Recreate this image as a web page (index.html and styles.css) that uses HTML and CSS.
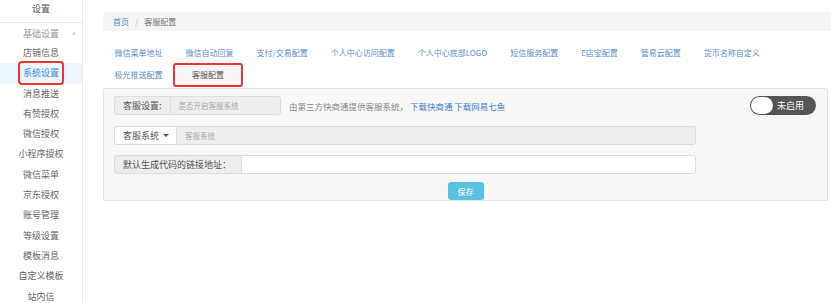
FILE: index.html
```html
<!DOCTYPE html>
<html lang="zh">
<head>
    <meta charset="UTF-8">
    <title>客服配置</title>
    <link rel="stylesheet" href="styles.css">
</head>
<body>
    <aside class="sidebar">
        <div class="side-title">设置</div>
        <div class="side-group">基础设置 <span class="chev">^</span></div>
        <div class="side-item">店铺信息</div>
        <div class="side-item active"><span class="mark">系统设置</span></div>
        <div class="side-item">消息推送</div>
        <div class="side-item">有赞授权</div>
        <div class="side-item">微信授权</div>
        <div class="side-item">小程序授权</div>
        <div class="side-item">微信菜单</div>
        <div class="side-item">京东授权</div>
        <div class="side-item">账号管理</div>
        <div class="side-item">等级设置</div>
        <div class="side-item">模板消息</div>
        <div class="side-item">自定义模板</div>
        <div class="side-item">站内信</div>
    </aside>
    <main class="content">
        <div class="crumb">
            <a href="#">首页</a><span class="sep">/</span><span class="here">客服配置</span>
        </div>
        <nav class="tabs">
            <a href="#">微信菜单地址</a>
            <a href="#">微信自动回复</a>
            <a href="#">支付/交易配置</a>
            <a href="#">个人中心访问配置</a>
            <a href="#">个人中心底部LOGO</a>
            <a href="#">短信服务配置</a>
            <a href="#">E店宝配置</a>
            <a href="#">管易云配置</a>
            <a href="#">货币名称自定义</a>
            <a href="#">极光推送配置</a>
            <a href="#" class="current">客服配置</a>
        </nav>
        <div class="panel">
            <div class="row first">
                <div class="group small">
                    <span class="addon">客服设置:</span>
                    <span class="field ro">是否开启客服系统</span>
                </div>
                <span class="desc">由第三方快商通提供客服系统， <a href="#">下载快商通</a> <a href="#">下载网易七鱼</a></span>
                <div class="toggle"><span class="knob"></span>未启用</div>
            </div>
            <div class="row">
                <div class="group">
                    <span class="addon btn">客服系统 <span class="caret"></span></span>
                    <span class="field ro">客服系统</span>
                </div>
            </div>
            <div class="row">
                <div class="group">
                    <span class="addon wide">默认生成代码的链接地址：</span>
                    <span class="field"></span>
                </div>
            </div>
            <div class="actions">
                <button class="save">保存</button>
            </div>
        </div>
    </main>
</body>
</html>
```

FILE: styles.css
```css
body {
    margin: 0;
    display: flex;
    font-family: "Noto Sans CJK SC", "Liberation Sans", sans-serif;
    color: #555;
    background: #fff;
    height: 303px;
    overflow: hidden;
}
a {
    color: #4f8fcc;
    text-decoration: none;
}
.sidebar {
    width: 82px;
    flex-shrink: 0;
    border-right: 1px solid #e8e8e8;
    font-size: 9px;
    text-align: center;
}
.side-title {
    height: 22px;
    line-height: 17px;
    border-bottom: 1px solid #e8e8e8;
    color: #555;
}
.side-group {
    height: 20px;
    line-height: 21px;
    color: #999;
    position: relative;
}
.chev {
    position: absolute;
    right: 6px;
    top: 1px;
    font-size: 7px;
    color: #aaa;
}
.side-item {
    height: 20.3px;
    line-height: 20.3px;
    color: #666;
}
.side-item.active {
    background: #edf5fe;
    color: #3b8de0;
}
.mark {
    display: inline-block;
    line-height: 20px;
    padding: 0 3px;
    outline: 2px solid #e33;
    border-radius: 2px;
}
.content {
    flex: 1;
    padding: 12px 0 0 20px;
}
.crumb {
    height: 19px;
    line-height: 19px;
    background: #f5f5f5;
    border-radius: 4px 0 0 4px;
    padding-left: 10px;
    font-size: 8px;
}
.crumb .sep {
    color: #bbb;
    margin: 0 6px;
}
.crumb .here {
    color: #777;
}
.tabs {
    display: flex;
    flex-wrap: wrap;
    margin-top: 11px;
    width: 720px;
    font-size: 8px;
}
.tabs a {
    height: 22px;
    line-height: 22px;
    padding: 0 11.5px;
    color: #5b8fc8;
}
.tabs a.current {
    color: #555;
    padding: 0 18px;
    background: #f7f7f7;
    outline: 2px solid #e33;
    outline-offset: -1px;
    border-radius: 2px;
}
.panel {
    margin-right: 3px;
    margin-top: 2px;
    background: #f7f7f7;
    border: 1px solid #e4e4e4;
    border-radius: 2px;
    padding: 7px 10px 1px;
    height: 103px;
}
.row {
    display: flex;
    align-items: center;
    margin-bottom: 10px;
}
.row.first {
    margin-bottom: 11px;
}
.group {
    display: flex;
    width: 582px;
    height: 19px;
    font-size: 9px;
}
.group.small {
    width: 167px;
}
.addon {
    display: flex;
    align-items: center;
    padding: 0 8px;
    background: #eee;
    border: 1px solid #ddd;
    border-right: none;
    border-radius: 3px 0 0 3px;
    color: #555;
    white-space: nowrap;
}
.addon.btn {
    background: #fff;
    padding: 0 7px 0 8px;
}
.addon.wide {
    padding: 0 10px 0 8px;
}
.caret {
    display: inline-block;
    margin-left: 4px;
    border-top: 3px solid #555;
    border-left: 3px solid transparent;
    border-right: 3px solid transparent;
}
.field {
    flex: 1;
    display: flex;
    align-items: center;
    padding: 0 8px;
    background: #fff;
    border: 1px solid #ddd;
    border-radius: 0 3px 3px 0;
    font-size: 7.5px;
    color: #aaa;
}
.field.ro {
    background: #eee;
}
.desc {
    margin-left: 8px;
    font-size: 8.5px;
    color: #888;
    white-space: nowrap;
}
.desc a {
    color: #3d7fc4;
}
.toggle {
    margin-left: auto;
    margin-right: 1px;
    width: 66px;
    height: 19px;
    box-sizing: border-box;
    background: #555;
    border-radius: 10px;
    display: flex;
    align-items: center;
    color: #fff;
    font-size: 9px;
    padding: 0 1px;
}
.knob {
    width: 22px;
    height: 17px;
    border-radius: 9px;
    background: #fff;
    margin-right: 4px;
}
.actions {
    display: flex;
    justify-content: center;
    margin-top: -2px;
}
.save {
    width: 36px;
    height: 18px;
    border: none;
    border-radius: 3px;
    background: #5bc0de;
    color: #fff;
    font-family: inherit;
    font-size: 8px;
    padding: 0;
}
```
